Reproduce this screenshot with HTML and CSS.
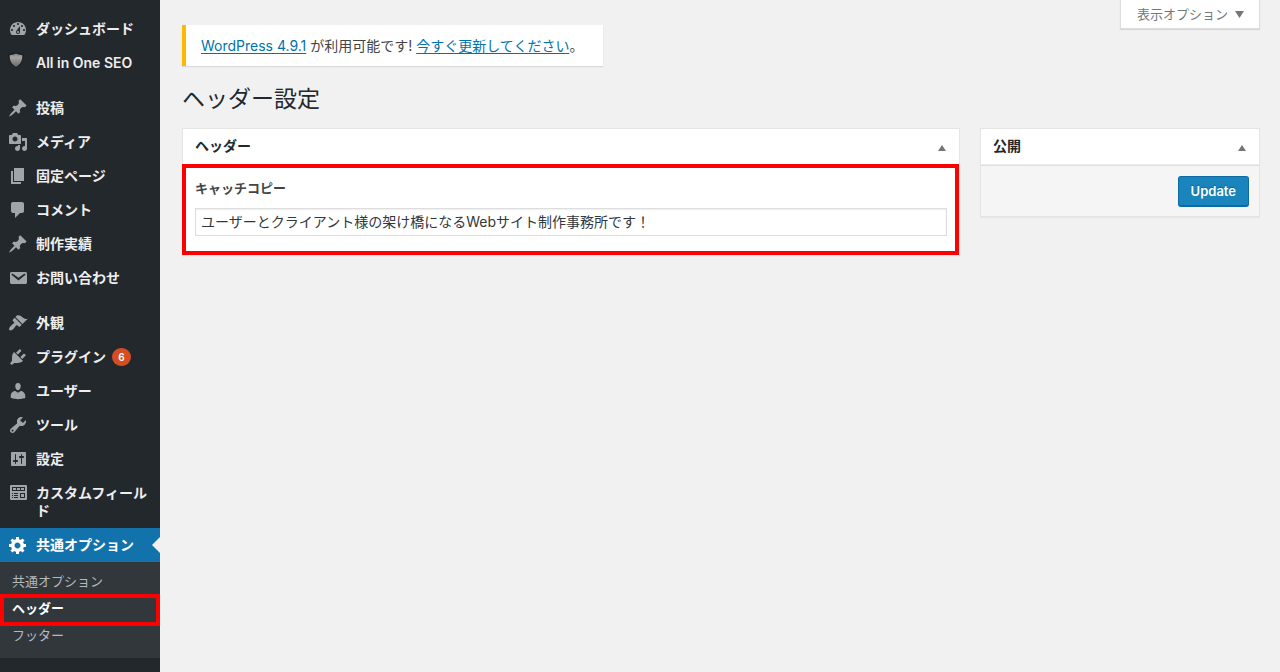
FILE: index.html
```html
<!DOCTYPE html>
<html lang="ja">
<head>
<meta charset="utf-8">
<title>ヘッダー設定</title>
<link rel="stylesheet" href="styles.css">
</head>
<body>
<div class="layout">
  <nav class="sidebar" aria-label="メインメニュー">
    <ul class="menu">
      <li><a class="menu-link" href="#"><svg class="icon" viewBox="0 0 20 20"><path d="M3.76 16h12.48c1.1-1.37 1.76-3.11 1.76-5 0-4.42-3.58-8-8-8s-8 3.58-8 8c0 1.89.66 3.63 1.76 5zM10 4c.55 0 1 .45 1 1s-.45 1-1 1-1-.45-1-1 .45-1 1-1zM6 6c.55 0 1 .45 1 1s-.45 1-1 1-1-.45-1-1 .45-1 1-1zm8 0c.55 0 1 .45 1 1s-.45 1-1 1-1-.45-1-1 .45-1 1-1zm-5.37 5.55L12 7v6c0 1.1-.9 2-2 2s-2-.9-2-2c0-.57.24-1.08.63-1.45zM4 10c.55 0 1 .45 1 1s-.45 1-1 1-1-.45-1-1 .45-1 1-1zm12 0c.55 0 1 .45 1 1s-.45 1-1 1-1-.45-1-1 .45-1 1-1zm-5 3c0-.55-.45-1-1-1s-1 .45-1 1 .45 1 1 1 1-.45 1-1z"/></svg><span>ダッシュボード</span></a></li>
      <li><a class="menu-link" href="#"><svg class="icon" viewBox="0 0 20 20"><defs><linearGradient id="shield" x1="0" y1="0" x2="0" y2="1"><stop offset="0" stop-color="#777"/><stop offset="0.3" stop-color="#a6a6a6"/><stop offset="1" stop-color="#606060"/></linearGradient></defs><path d="M8 0c2 1 4.300 1.500 6.800 1.500.4 5.500-1.600 10-6.800 13-5.200-3-7.200-7.500-6.800-13C3.700 1.500 6 1 8 0z" fill="url(#shield)" stroke="#15181b"/></svg><span>All in One SEO</span></a></li>
      <li class="group-start"><a class="menu-link" href="#"><svg class="icon" viewBox="0 0 20 20"><path d="M10.440 3.020l1.820-1.820 6.360 6.350-1.830 1.820c-1.050-.68-2.480-.57-3.410.36l-.75.75c-.92.93-1.040 2.350-.35 3.410l-1.830 1.820-2.410-2.410-2.800 2.790c-.42.42-3.380 2.710-3.800 2.290s1.860-3.390 2.280-3.810l2.790-2.790L4.100 9.360l1.830-1.820c1.050.69 2.480.57 3.400-.36l.75-.75c.93-.92 1.050-2.350.36-3.410z"/></svg><span>投稿</span></a></li>
      <li><a class="menu-link" href="#"><svg class="icon" viewBox="0 0 20 20"><path d="M13 11V4c0-.55-.45-1-1-1h-1.670L9 1H5L3.670 3H2c-.55 0-1 .45-1 1v7c0 .55.45 1 1 1h10c.55 0 1-.45 1-1zM7 4.500c1.380 0 2.500 1.120 2.500 2.500S8.380 9.500 7 9.500 4.500 8.380 4.500 7 5.620 4.500 7 4.500zM14 6h5v10.500c0 1.380-1.120 2.500-2.500 2.500S14 17.880 14 16.500s1.120-2.500 2.500-2.500c.17 0 .34.02.5.05V9h-3V6zm-4 8.050V13h2v3.500c0 1.380-1.120 2.500-2.500 2.500S7 17.880 7 16.500 8.120 14 9.500 14c.17 0 .34.02.5.05z"/></svg><span>メディア</span></a></li>
      <li><a class="menu-link" href="#"><svg class="icon" viewBox="0 0 20 20"><path d="M6 15V2h10v13H6zm-1 1h8v2H3V5h2v11z"/></svg><span>固定ページ</span></a></li>
      <li><a class="menu-link" href="#"><svg class="icon" viewBox="0 0 20 20"><path d="M5 2h9c1.100 0 2 .9 2 2v7c0 1.100-.9 2-2 2h-2l-5 5v-5H5c-1.100 0-2-.9-2-2V4c0-1.100.9-2 2-2z"/></svg><span>コメント</span></a></li>
      <li><a class="menu-link" href="#"><svg class="icon" viewBox="0 0 20 20"><path d="M10.440 3.020l1.820-1.820 6.360 6.350-1.830 1.820c-1.050-.68-2.480-.57-3.410.36l-.75.75c-.92.93-1.040 2.350-.35 3.410l-1.830 1.820-2.410-2.410-2.800 2.790c-.42.42-3.380 2.710-3.800 2.290s1.860-3.390 2.280-3.810l2.790-2.790L4.100 9.360l1.830-1.820c1.050.69 2.480.57 3.400-.36l.75-.75c.93-.92 1.050-2.350.36-3.410z"/></svg><span>制作実績</span></a></li>
      <li><a class="menu-link" href="#"><svg class="icon" viewBox="0 0 20 20"><path d="M3.870 4h13.250C18.370 4 19 4.590 19 5.790v8.420c0 1.190-.63 1.790-1.880 1.790H3.870c-1.250 0-1.880-.6-1.880-1.790V5.790c0-1.200.63-1.790 1.880-1.790zm6.620 8.600l6.740-5.530c.24-.2.43-.66.13-1.070-.29-.41-.82-.42-1.170-.17l-5.700 3.860L4.800 5.830c-.35-.25-.88-.24-1.170.17-.3.41-.11.87.13 1.070z"/></svg><span>お問い合わせ</span></a></li>
      <li class="group-start"><a class="menu-link" href="#"><svg class="icon" viewBox="0 0 20 20"><path d="M14.480 11.060L7.410 3.990l1.500-1.500c.5-.56 2.300-.47 3.510.32 1.210.8 1.430 1.280 2.910 2.100 1.180.64 2.450 1.260 4.450.85zm-.71.71L6.700 4.700 4.930 6.470c-.39.39-.39 1.020 0 1.410l1.060 1.060c.39.39.39 1.030 0 1.420-.6.6-1.430 1.110-2.210 1.690-.35.26-.7.53-1.010.84C1.430 14.230.4 16.080 1.400 17.070c.99 1 2.840-.03 4.180-1.360.31-.31.58-.66.85-1.020.57-.78 1.080-1.610 1.690-2.210.39-.39 1.020-.39 1.410 0l1.060 1.060c.39.39 1.020.39 1.410 0z"/></svg><span>外観</span></a></li>
      <li><a class="menu-link" href="#"><svg class="icon" viewBox="0 0 20 20"><path d="M13.110 4.360L9.870 7.600 8 5.730l3.240-3.240c.35-.34 1.050-.2 1.560.32.52.51.66 1.210.31 1.550zm-8 1.770l.91-1.120 9.010 9.010-1.190.84c-.71.71-2.630 1.160-3.820 1.160H6.140L4.900 17.260c-.59.59-1.540.59-2.120 0-.59-.58-.59-1.530 0-2.120l1.240-1.240v-3.880c0-1.130.4-3.190 1.090-3.890zm7.260 3.970l3.240-3.240c.34-.35 1.040-.21 1.550.31.52.51.66 1.210.31 1.550l-3.240 3.250z"/></svg><span>プラグイン</span><span class="badge">6</span></a></li>
      <li><a class="menu-link" href="#"><svg class="icon" viewBox="0 0 20 20"><path d="M10 9.250c-2.270 0-2.730-3.440-2.730-3.440C7 4.020 7.820 2 9.970 2c2.160 0 2.980 2.020 2.710 3.810 0 0-.41 3.440-2.680 3.440zm0 2.570L12.720 10c2.390 0 4.520 2.330 4.520 4.530v2.490s-3.650 1.130-7.240 1.130c-3.650 0-7.240-1.130-7.240-1.130v-2.490c0-2.250 1.940-4.480 4.470-4.480z"/></svg><span>ユーザー</span></a></li>
      <li><a class="menu-link" href="#"><svg class="icon" viewBox="0 0 20 20"><path d="M16.680 9.770c-1.340 1.340-3.300 1.670-4.950.99l-5.410 6.520c-.99.99-2.590.99-3.580 0s-.99-2.590 0-3.570l6.520-5.420c-.68-1.650-.35-3.610.99-4.950 1.280-1.280 3.120-1.620 4.720-1.060l-2.890 2.890 2.820 2.820 2.860-2.870c.53 1.580.18 3.390-1.080 4.650zM3.810 16.210c.4.39 1.040.39 1.430 0 .4-.4.4-1.040 0-1.430-.39-.4-1.030-.4-1.430 0-.39.39-.39 1.030 0 1.430z"/></svg><span>ツール</span></a></li>
      <li><a class="menu-link" href="#"><svg class="icon" viewBox="0 0 20 20"><path d="M18 16V4c0-.55-.45-1-1-1H4c-.55 0-1 .45-1 1v12c0 .55.45 1 1 1h13c.55 0 1-.45 1-1zM8 11h1c.55 0 1 .45 1 1s-.45 1-1 1H8v1.500c0 .28-.22.5-.5.5s-.5-.22-.5-.5V13H6c-.55 0-1-.45-1-1s.45-1 1-1h1V5.500c0-.28.22-.5.5-.5s.5.22.5.5V11zm5-2h-1c-.55 0-1-.45-1-1s.45-1 1-1h1V5.500c0-.28.22-.5.5-.5s.5.22.5.5V7h1c.55 0 1 .45 1 1s-.45 1-1 1h-1v5.500c0 .28-.22.5-.5.5s-.5-.22-.5-.5V9z"/></svg><span>設定</span></a></li>
      <li><a class="menu-link" href="#"><svg class="icon" viewBox="0 1 20 20"><path fill-rule="evenodd" d="M3 3h15a1 1 0 0 1 1 1v13a1 1 0 0 1-1 1H3a1 1 0 0 1-1-1V4a1 1 0 0 1 1-1zM4 5v4h13V5zM4 11v1h1v-1zm2 0v1h4v-1zm-2 2v1h1v-1zm2 0v1h4v-1zm-2 2v1h1v-1zm2 0v1h4v-1zM12 11v5h5v-5z"/><path d="M5 6h3v2H5zM9 6h3v2H9zM13 6h3v2h-3zM13 12h3v3h-3z"/></svg><span>カスタムフィールド</span></a></li>
      <li><a class="menu-link current" href="#"><svg class="icon" viewBox="0 0 20 20"><path d="M18 12h-2.180c-.17.7-.44 1.350-.81 1.930l1.540 1.540-2.100 2.100-1.540-1.540c-.58.36-1.230.63-1.910.79V19H8v-2.180c-.68-.16-1.330-.43-1.910-.79l-1.540 1.540-2.120-2.120 1.540-1.540c-.36-.58-.63-1.230-.79-1.910H1V9.030h2.170c.16-.7.44-1.350.8-1.940L2.430 5.550l2.100-2.100 1.540 1.540c.58-.37 1.240-.64 1.930-.81V2h3v2.180c.68.16 1.330.43 1.910.79l1.540-1.540 2.120 2.120-1.540 1.540c.36.59.64 1.240.8 1.940H18V12zm-8.500 1.500c1.660 0 3-1.340 3-3s-1.340-3-3-3-3 1.340-3 3 1.340 3 3 3z"/></svg><span>共通オプション</span></a>
        <ul class="submenu">
          <li><a href="#">共通オプション</a></li>
          <li class="marked"><a class="active" href="#">ヘッダー</a></li>
          <li><a href="#">フッター</a></li>
        </ul>
      </li>
    </ul>
  </nav>
  <main class="content">
    <button class="screen-options" type="button">表示オプション<svg class="caret" viewBox="0 0 9 7"><path d="M0 0h9L4.500 7z"/></svg></button>
    <div class="notice"><a href="#">WordPress 4.9.1</a> が利用可能です! <a href="#">今すぐ更新してください</a>。</div>
    <h1 class="title">ヘッダー設定</h1>
    <div class="columns">
      <section class="box">
        <div class="box-head"><h2>ヘッダー</h2><button class="toggle" type="button" aria-label="パネルを閉じる"><svg viewBox="0 0 8 6"><path d="M4 0l4 6H0z"/></svg></button></div>
        <div class="field">
          <label for="catch">キャッチコピー</label>
          <input id="catch" type="text" value="ユーザーとクライアント様の架け橋になるWebサイト制作事務所です！">
        </div>
      </section>
      <section class="box">
        <div class="box-head"><h2>公開</h2><button class="toggle" type="button" aria-label="パネルを閉じる"><svg viewBox="0 0 8 6"><path d="M4 0l4 6H0z"/></svg></button></div>
        <div class="publish"><button class="primary" type="submit">Update</button></div>
      </section>
    </div>
  </main>
</div>
</body>
</html>
```
FILE: styles.css
```css
* { box-sizing: border-box; }
body {
  margin: 0;
  background: #f1f1f1;
  color: #444;
  font: 14px/18px Inter, "Noto Sans CJK JP", sans-serif;
}
button, input { font: inherit; }
ul { list-style: none; margin: 0; padding: 0; }

.layout { display: grid; grid-template-columns: 160px minmax(0, 1fr); min-height: 100vh; }

.sidebar { background: #23282d; padding-top: 12px; }
.group-start { margin-top: 11px; }
.menu-link {
  display: flex;
  align-items: flex-start;
  padding: 8px 8px 8px 36px;
  position: relative;
  color: #eee;
  font-weight: 600;
  text-decoration: none;
}
.icon { position: absolute; left: 8px; top: 7px; width: 20px; height: 20px; fill: #a0a5aa; }
.current { background: #1272ac; color: #fff; }
.current .icon { fill: #fff; }
.current::after {
  content: "";
  position: absolute;
  right: 0;
  top: 9px;
  border: 8px solid transparent;
  border-left: 0;
  border-right-color: #f1f1f1;
}
.badge {
  margin-left: 6px;
  min-width: 19px;
  border-radius: 9px;
  background: #d54e21;
  color: #fff;
  font-size: 10px;
  text-align: center;
}
.submenu { background: #32373c; padding: 6px 0 9px; font-size: 13px; }
.submenu a { display: block; padding: 4px 12px 5px; color: #b4b9be; text-decoration: none; }
.submenu .active { color: #fff; font-weight: 600; }
.marked { position: relative; }
.marked::after { content: ""; position: absolute; inset: -1px 0 -4px; border: 4px solid #f00; pointer-events: none; }

.content { position: relative; padding: 25px 20px 20px 22px; }
.screen-options {
  position: absolute;
  top: 0;
  right: 20px;
  display: flex;
  align-items: center;
  gap: 7px;
  padding: 5px 15px 5px 16px;
  border: 1px solid #ddd;
  border-top: 0;
  background: #fff;
  box-shadow: 0 1px 1px rgba(0, 0, 0, 0.1);
  color: #72777c;
  font-size: 13px;
}
.caret { width: 9px; height: 7px; fill: currentColor; }

.notice {
  width: fit-content;
  padding: 12px 20px 11px 15px;
  border-left: 4px solid #ffb900;
  background: #fff;
  box-shadow: 0 1px 1px rgba(0, 0, 0, 0.1);
}
.notice a { color: #0073aa; text-underline-offset: 2px; }
.title { margin: 17px 0 13px; color: #23282d; font-size: 23px; font-weight: 400; line-height: 32px; }

.columns { display: grid; grid-template-columns: minmax(0, 1fr) 280px; gap: 20px; align-items: start; }
.box { border: 1px solid #e5e5e5; background: #fff; box-shadow: 0 1px 1px rgba(0, 0, 0, 0.04); }
.box-head { display: flex; align-items: center; justify-content: space-between; padding: 8px 12px 9px; border-bottom: 1px solid #eee; }
.box-head h2 { margin: 0; color: #23282d; font-size: 14px; font-weight: 600; }
.toggle { display: flex; padding: 4px 1px 1px; border: 0; background: none; }
.toggle svg { width: 8px; height: 6px; fill: #72777c; }
.field { position: relative; padding: 14px 12px 18px; }
.field::after { content: ""; position: absolute; inset: -1px 0 -1px -1px; border: 4px solid #f00; pointer-events: none; }
.field label { display: block; margin-bottom: 11px; font-size: 13px; font-weight: 600; }
.field input {
  display: block;
  width: 100%;
  height: 28px;
  padding: 2px 5px 4px;
  border: 1px solid #ddd;
  background: #fff;
  box-shadow: inset 0 1px 2px rgba(0, 0, 0, 0.07);
  color: #32373c;
}
.publish { display: flex; justify-content: flex-end; padding: 10px 10px 9px; border-top: 1px solid #ddd; background: #f5f5f5; }
.primary {
  padding: 5px 12px;
  border: 1px solid #0e6aa3;
  border-bottom-width: 2px;
  border-radius: 3px;
  background: #1a84bc;
  color: #fff;
  font-size: 13px;
  font-weight: 600;
  text-shadow: 0 -1px 1px #006799;
}
```
